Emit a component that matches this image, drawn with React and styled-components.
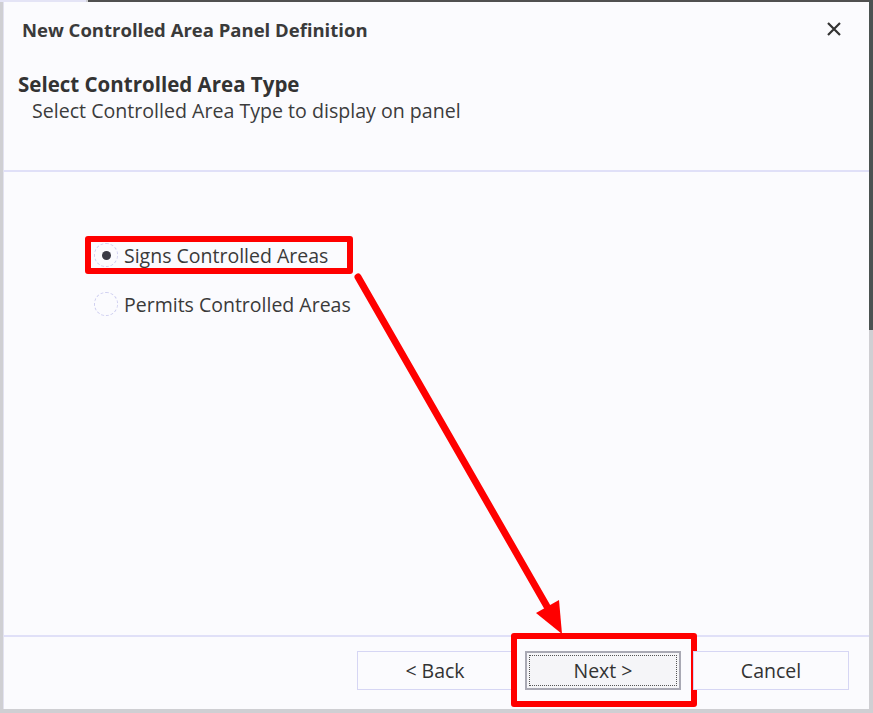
import React, { useState } from "react";
import styled, { createGlobalStyle } from "styled-components";

const GlobalStyle = createGlobalStyle`
  html, body {
    margin: 0;
    padding: 0;
    background: #cfcfd3;
  }
  body {
    font-family: "Open Sans", "Noto Sans", sans-serif;
    color: #333;
  }
`;

const Frame = styled.div`
  position: relative;
  width: 873px;
  height: 713px;
  box-sizing: border-box;
  padding: 2px 4px 4px 3px;
  background:
    linear-gradient(#4b5352, #4b5352) right top / 4px 330px no-repeat,
    linear-gradient(#505050, #505050) 88px 0 / 100% 2px no-repeat,
    linear-gradient(#e4e4f6, #e4e4f6) 0 0 / 86px 2px no-repeat,
    #cfcfd3;
`;

const Dialog = styled.div`
  height: 100%;
  box-sizing: border-box;
  display: flex;
  flex-direction: column;
  background: #fbfbfe;
  border-left: 1px solid #e2e2f0;
`;

const TitleBar = styled.div`
  height: 58px;
  box-sizing: border-box;
  padding: 0 26px 4px 18px;
  display: flex;
  align-items: center;
  justify-content: space-between;
`;

const Title = styled.div`
  font-size: 18.5px;
  font-weight: 700;
  color: #3a3a3a;
`;

const CloseButton = styled.button`
  border: none;
  background: none;
  padding: 0;
  width: 18px;
  height: 18px;
  display: flex;
  align-items: center;
  justify-content: center;
  cursor: pointer;
`;

const Header = styled.div`
  height: 112px;
  box-sizing: border-box;
  padding: 11px 0 0 14px;
  border-bottom: 2px solid #e0e0f8;
`;

const Heading = styled.div`
  font-size: 20.5px;
  line-height: 26px;
  font-weight: 700;
  color: #333;
`;

const Subtitle = styled.div`
  font-size: 19.6px;
  line-height: 28px;
  padding-left: 14px;
  color: #3c3c3c;
`;

const Body = styled.div`
  flex: 1;
  padding: 70px 0 0 86px;
  display: flex;
  flex-direction: column;
  align-items: flex-start;
  gap: 23px;
`;

const RadioRow = styled.label`
  position: relative;
  display: flex;
  align-items: center;
  gap: 6px;
  height: 26px;
  padding: 0 8px 0 4px;
  cursor: pointer;
  ${(p) =>
    p.$marked &&
    `
    &::after {
      content: "";
      position: absolute;
      inset: -6px -17px -6px -5px;
      border: 6px solid #ff0000;
      border-radius: 3px;
      pointer-events: none;
    }
  `}
`;

const RadioCircle = styled.span`
  width: 24px;
  height: 24px;
  box-sizing: border-box;
  border-radius: 50%;
  border: 1px dashed #cfcff0;
  display: flex;
  align-items: center;
  justify-content: center;

  &::before {
    content: "";
    width: 9px;
    height: 9px;
    border-radius: 50%;
    background: ${(p) => (p.$checked ? "#3a3a44" : "transparent")};
  }
`;

const RadioLabel = styled.span`
  font-size: 19.5px;
  color: #3a3a3a;
`;

const Footer = styled.div`
  height: 74px;
  box-sizing: border-box;
  border-top: 2px solid #e0e0f8;
  display: flex;
  justify-content: flex-end;
  align-items: flex-start;
  gap: 12px;
  padding: 14px 20px 0 0;
`;

const ButtonWrap = styled.div`
  position: relative;
  ${(p) =>
    p.$marked &&
    `
    &::after {
      content: "";
      position: absolute;
      inset: -18px -16px -17px -14px;
      border: 6px solid #ff0000;
      border-radius: 3px;
      pointer-events: none;
    }
  `}
`;

const Button = styled.button`
  width: 156px;
  height: 39px;
  box-sizing: border-box;
  font-family: "Open Sans", "Noto Sans", sans-serif;
  font-size: 19.5px;
  color: #333;
  background: ${(p) => (p.$focused ? "#f5f5f8" : "#fbfbfe")};
  border: ${(p) => (p.$focused ? "2px solid #a9a9b4" : "1px solid #d6d6f4")};
  border-radius: 0;
  padding: 0;
  cursor: pointer;
  ${(p) =>
    p.$focused &&
    `
    outline: 1px dotted #555;
    outline-offset: -5px;
  `}
`;

const Overlay = styled.svg`
  position: absolute;
  left: 0;
  top: 0;
  pointer-events: none;
`;

export default function App() {
  const [type, setType] = useState("signs");

  return (
    <>
      <GlobalStyle />
      <Frame>
        <Dialog>
          <TitleBar>
            <Title>New Controlled Area Panel Definition</Title>
            <CloseButton aria-label="Close">
              <svg width="16" height="16" viewBox="0 0 16 16">
                <path
                  d="M2 2 L14 14 M14 2 L2 14"
                  stroke="#333"
                  strokeWidth="2.2"
                  fill="none"
                />
              </svg>
            </CloseButton>
          </TitleBar>
          <Header>
            <Heading>Select Controlled Area Type</Heading>
            <Subtitle>Select Controlled Area Type to display on panel</Subtitle>
          </Header>
          <Body>
            <RadioRow $marked onClick={() => setType("signs")}>
              <RadioCircle $checked={type === "signs"} />
              <RadioLabel>Signs Controlled Areas</RadioLabel>
            </RadioRow>
            <RadioRow onClick={() => setType("permits")}>
              <RadioCircle $checked={type === "permits"} />
              <RadioLabel>Permits Controlled Areas</RadioLabel>
            </RadioRow>
          </Body>
          <Footer>
            <ButtonWrap>
              <Button>&lt; Back</Button>
            </ButtonWrap>
            <ButtonWrap $marked>
              <Button $focused>Next &gt;</Button>
            </ButtonWrap>
            <ButtonWrap>
              <Button>Cancel</Button>
            </ButtonWrap>
          </Footer>
        </Dialog>
        <Overlay width="873" height="713" viewBox="0 0 873 713">
          <line
            x1="358"
            y1="277"
            x2="549"
            y2="610"
            stroke="#ff0000"
            strokeWidth="7"
            strokeLinecap="round"
          />
          <polygon points="562,634 536,613 559,600" fill="#ff0000" />
        </Overlay>
      </Frame>
    </>
  );
}
